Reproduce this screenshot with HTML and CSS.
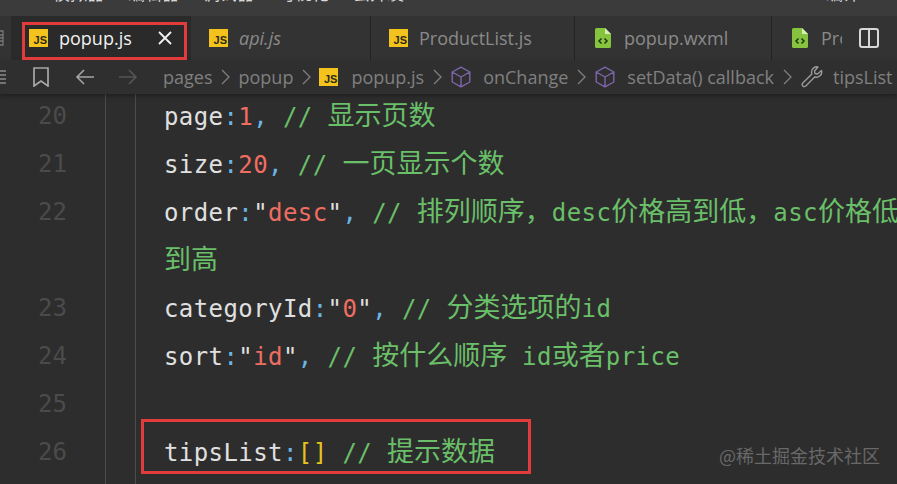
FILE: index.html
```html
<!DOCTYPE html>
<html lang="zh">
<head>
<meta charset="utf-8">
<title>popup.js</title>
<link rel="stylesheet" href="styles.css">
</head>
<body>
<svg class="defs" width="0" height="0" aria-hidden="true">
  <symbol id="cube" viewBox="0 0 20 22"><path d="M10 1.200 18.800 6v10L10 20.800 1.200 16V6zM1.200 6 10 11l8.800-5M10 11v9.800" fill="none" stroke="#7d66aa" stroke-width="1.400" stroke-linejoin="round"/></symbol>
  <symbol id="chev" viewBox="0 0 9 16"><path d="M1 1l7 7-7 7" fill="none" stroke="#7f7f7f" stroke-width="1.300"/></symbol>
  <symbol id="wxml" viewBox="0 0 16 20"><path d="M1.500 0H10l6 6v12.500a1.500 1.500 0 0 1-1.500 1.500h-13A1.500 1.500 0 0 1 0 18.500v-17A1.500 1.500 0 0 1 1.500 0z" fill="#86c440"/><path d="M10 0v6h6z" fill="#d6efb4"/><path d="M6.500 10.500 4 13l2.500 2.500M9.500 10.500 12 13l-2.500 2.500" fill="none" stroke="#1d3a10" stroke-width="1.500"/></symbol>
</svg>
<div class="menu">
  <span class="menu-item">模拟器</span><span class="menu-item">编辑器</span><span class="menu-item">调试器</span><span class="menu-item">可视化</span><span class="menu-item">云开发</span>
  <span class="menu-right">编译</span>
</div>
<div class="tabs">
  <div class="tab tab-stub"><svg width="4" height="16" viewBox="0 0 4 16"><path d="M0 1h3v14H0M0 5h3M0 8h3M0 11h3" fill="none" stroke="#777" stroke-width="1.300"/></svg></div>
  <div class="tab tab-active"><span class="js-icon">JS</span><span class="tab-name">popup.js</span>
    <svg class="close" width="14" height="14" viewBox="0 0 14 14"><path d="M1 1l12 12M13 1 1 13" stroke="#f2f2f2" stroke-width="1.800"/></svg></div>
  <div class="tab tab-api"><span class="js-icon">JS</span><span class="tab-name italic">api.js</span></div>
  <div class="tab tab-list"><span class="js-icon">JS</span><span class="tab-name">ProductList.js</span></div>
  <div class="tab tab-wxml"><svg class="doc" width="16" height="20"><use href="#wxml"/></svg><span class="tab-name">popup.wxml</span></div>
  <div class="tab tab-last"><svg class="doc" width="16" height="20"><use href="#wxml"/></svg><span class="tab-name">Pro</span></div>
  <div class="split"><svg width="20" height="20" viewBox="0 0 20 20"><rect x="1" y="1" width="18" height="18" rx="2" fill="none" stroke="#d8d8d8" stroke-width="2"/><path d="M10 1v18" stroke="#d8d8d8" stroke-width="2"/></svg></div>
</div>
<div class="crumbs">
  <svg class="c-list" width="7" height="16" viewBox="0 0 7 16"><path d="M0 2h6M0 6h6M0 10h6M0 14h6" stroke="#8a8a8a" stroke-width="1.500"/></svg>
  <svg class="c-mark" width="16" height="20" viewBox="0 0 16 20"><path d="M1 1h14v18l-7-5-7 5z" fill="none" stroke="#a8a8a8" stroke-width="1.700"/></svg>
  <svg class="c-back" width="20" height="16" viewBox="0 0 20 16"><path d="M19 8H2M9 1 2 8l7 7" fill="none" stroke="#a5a5a5" stroke-width="1.600"/></svg>
  <svg class="c-fwd" width="20" height="16" viewBox="0 0 20 16"><path d="M1 8h17M11 1l7 7-7 7" fill="none" stroke="#565656" stroke-width="1.600"/></svg>
  <span class="c-text c-first">pages</span><svg class="sep" width="9" height="16"><use href="#chev"/></svg><span class="c-text">popup</span><svg class="sep" width="9" height="16"><use href="#chev"/></svg>
  <span class="js-icon c-js">JS</span><span class="c-text">popup.js</span><svg class="sep" width="9" height="16"><use href="#chev"/></svg>
  <svg class="cube" width="20" height="22"><use href="#cube"/></svg><span class="c-text">onChange</span><svg class="sep" width="9" height="16"><use href="#chev"/></svg>
  <svg class="cube" width="20" height="22"><use href="#cube"/></svg><span class="c-text">setData() callback</span><svg class="sep" width="9" height="16"><use href="#chev"/></svg>
  <svg class="wrench" width="22" height="22" viewBox="0 0 22 22"><path d="M20.500 4.500 16.500 8 14 7.500 13.500 5l3.500-4c-3-.8-6.500 1.500-6.500 5 0 .8.200 1.500.4 2.100L1.800 17c-1.200 1.200-.5 2.300 0 2.900.7.700 1.900 1.200 3 0l8.900-8.900c3.800 1.300 8-2.200 6.800-6.500z" fill="none" stroke="#9a9a9a" stroke-width="1.400" stroke-linejoin="round"/></svg>
  <span class="c-text">tipsList</span>
</div>
<div class="editor">
  <div class="gutter">
    <div class="num">20</div><div class="num">21</div><div class="num">22</div><div class="num"></div><div class="num">23</div><div class="num">24</div><div class="num">25</div><div class="num">26</div>
  </div>
  <div class="indent"></div>
  <div class="code">
    <div class="line">page<i class="p">:</i><i class="n">1</i><i class="p">,</i> <i class="c">// <b>显示页数</b></i></div>
    <div class="line">size<i class="p">:</i><i class="n">20</i><i class="p">,</i> <i class="c">// <b>一页显示个数</b></i></div>
    <div class="line">order<i class="p">:</i>"<i class="n">desc</i>"<i class="p">,</i> <i class="c">// <b>排列顺序，</b>desc<b>价格高到低，</b>asc<b>价格低</b></i></div>
    <div class="line"><i class="c"><b>到高</b></i></div>
    <div class="line">categoryId<i class="p">:</i>"<i class="n">0</i>"<i class="p">,</i> <i class="c">// <b>分类选项的</b>id</i></div>
    <div class="line">sort<i class="p">:</i>"<i class="n">id</i>"<i class="p">,</i> <i class="c">// <b>按什么顺序</b> id<b>或者</b>price</i></div>
    <div class="line"></div>
    <div class="line">tipsList<i class="p">:</i><i class="y">[]</i> <i class="c">// <b>提示数据</b></i></div>
  </div>
</div>
<div class="mark mark-tab"></div>
<div class="mark mark-code"></div>
<div class="watermark">@稀土掘金技术社区</div>
</body>
</html>
```
FILE: styles.css
```css
* { box-sizing: border-box; }
html, body { margin: 0; height: 100%; overflow: hidden; }
body { background: #2d2d2d; font-family: "Open Sans", "Noto Sans CJK SC", sans-serif; position: relative; }
.defs { position: absolute; }

.menu { height: 16px; background: #3b3b3b; color: #d8d8d8; display: flex; overflow: hidden; padding-left: 53px; font: 17px/20px "Noto Sans CJK SC", sans-serif; }
.menu-item { width: 51px; margin-top: -17px; margin-right: 24px; height: 20px; white-space: nowrap; }
.menu-right { margin-left: auto; margin-right: 37px; margin-top: -17px; height: 20px; }

.tabs { height: 44px; background: #333333; display: flex; position: relative; overflow: hidden; }
.tab { height: 44px; display: flex; align-items: center; border-right: 1px solid #232323; color: #8a8a8a; font-size: 18px; white-space: nowrap; flex: none; }
.tab-stub { width: 11px; border: 0; }
.tab-active { width: 180px; background: #2a2a2a; color: #f2f2f2; padding-left: 18px; border-right-color: #2a2a2a; }
.tab-api { width: 180px; padding-left: 18px; }
.tab-list { width: 204px; padding-left: 18px; }
.tab-wxml { width: 197px; padding-left: 20px; }
.tab-last { width: 125px; padding-left: 20px; }
.tab-name { margin-left: 11px; }
.tab-wxml .tab-name, .tab-last .tab-name { margin-left: 13px; }
.italic { font-style: italic; }
.close { margin-left: 26px; }
.js-icon { width: 19px; height: 18px; background: #f4c21c; color: #2a2a1a; font: 700 11px/11px "Liberation Sans", sans-serif; display: flex; align-items: flex-end; justify-content: flex-end; padding: 0 1px 1px 0; flex: none; }
.split { position: absolute; right: 0; top: 0; height: 44px; width: 55px; background: #333333; display: flex; align-items: center; padding-left: 17px; }

.crumbs { height: 34px; background: #2f2f2f; display: flex; align-items: center; color: #808080; font-size: 18px; white-space: nowrap; overflow: hidden; box-shadow: 0 2px 4px rgba(0,0,0,.3); position: relative; }
.c-list { flex: none; }
.c-mark { margin-left: 26px; flex: none; }
.c-back { margin-left: 26px; flex: none; }
.c-fwd { margin-left: 23px; flex: none; }
.c-first { margin-left: 25px; }
.sep { margin: 0 8.5px; flex: none; }
.c-js { margin-right: 13px; }
.cube { margin-left: 1px; margin-right: 12px; flex: none; }
.wrench { margin-left: 1px; margin-right: 10px; flex: none; }

.editor { display: flex; height: 390px; overflow: hidden; font: 24px/40px "DejaVu Sans Mono", monospace; color: #e0e0e0; }
.gutter { width: 106px; flex: none; border-right: 1px solid #4c4c4c; padding-left: 38px; color: #4b4b4b; }
.indent { width: 30px; flex: none; border-right: 1px solid #4c4c4c; }
.code { padding-left: 28px; flex: none; width: 900px; letter-spacing: .42px; }
.num, .line { height: 48px; white-space: nowrap; }
.num { line-height: 44px; }
.line i { font-style: normal; }
.line b { font: 27px/40px "Noto Sans CJK SC", sans-serif; letter-spacing: 0; }
.p { color: #6cb6e6; }
.n { color: #f06d62; }
.y { color: #e6c41e; }
.c { color: #6abf69; }

.mark { position: absolute; border: 3px solid #e23b3b; }
.mark-tab { left: 22px; top: 22px; width: 165px; height: 38px; }
.mark-code { left: 141px; top: 419px; width: 390px; height: 55px; }
.watermark { position: absolute; left: 719px; top: 443px; font: 18px/24px "Noto Sans CJK SC", sans-serif; color: #686868; white-space: nowrap; }
```
